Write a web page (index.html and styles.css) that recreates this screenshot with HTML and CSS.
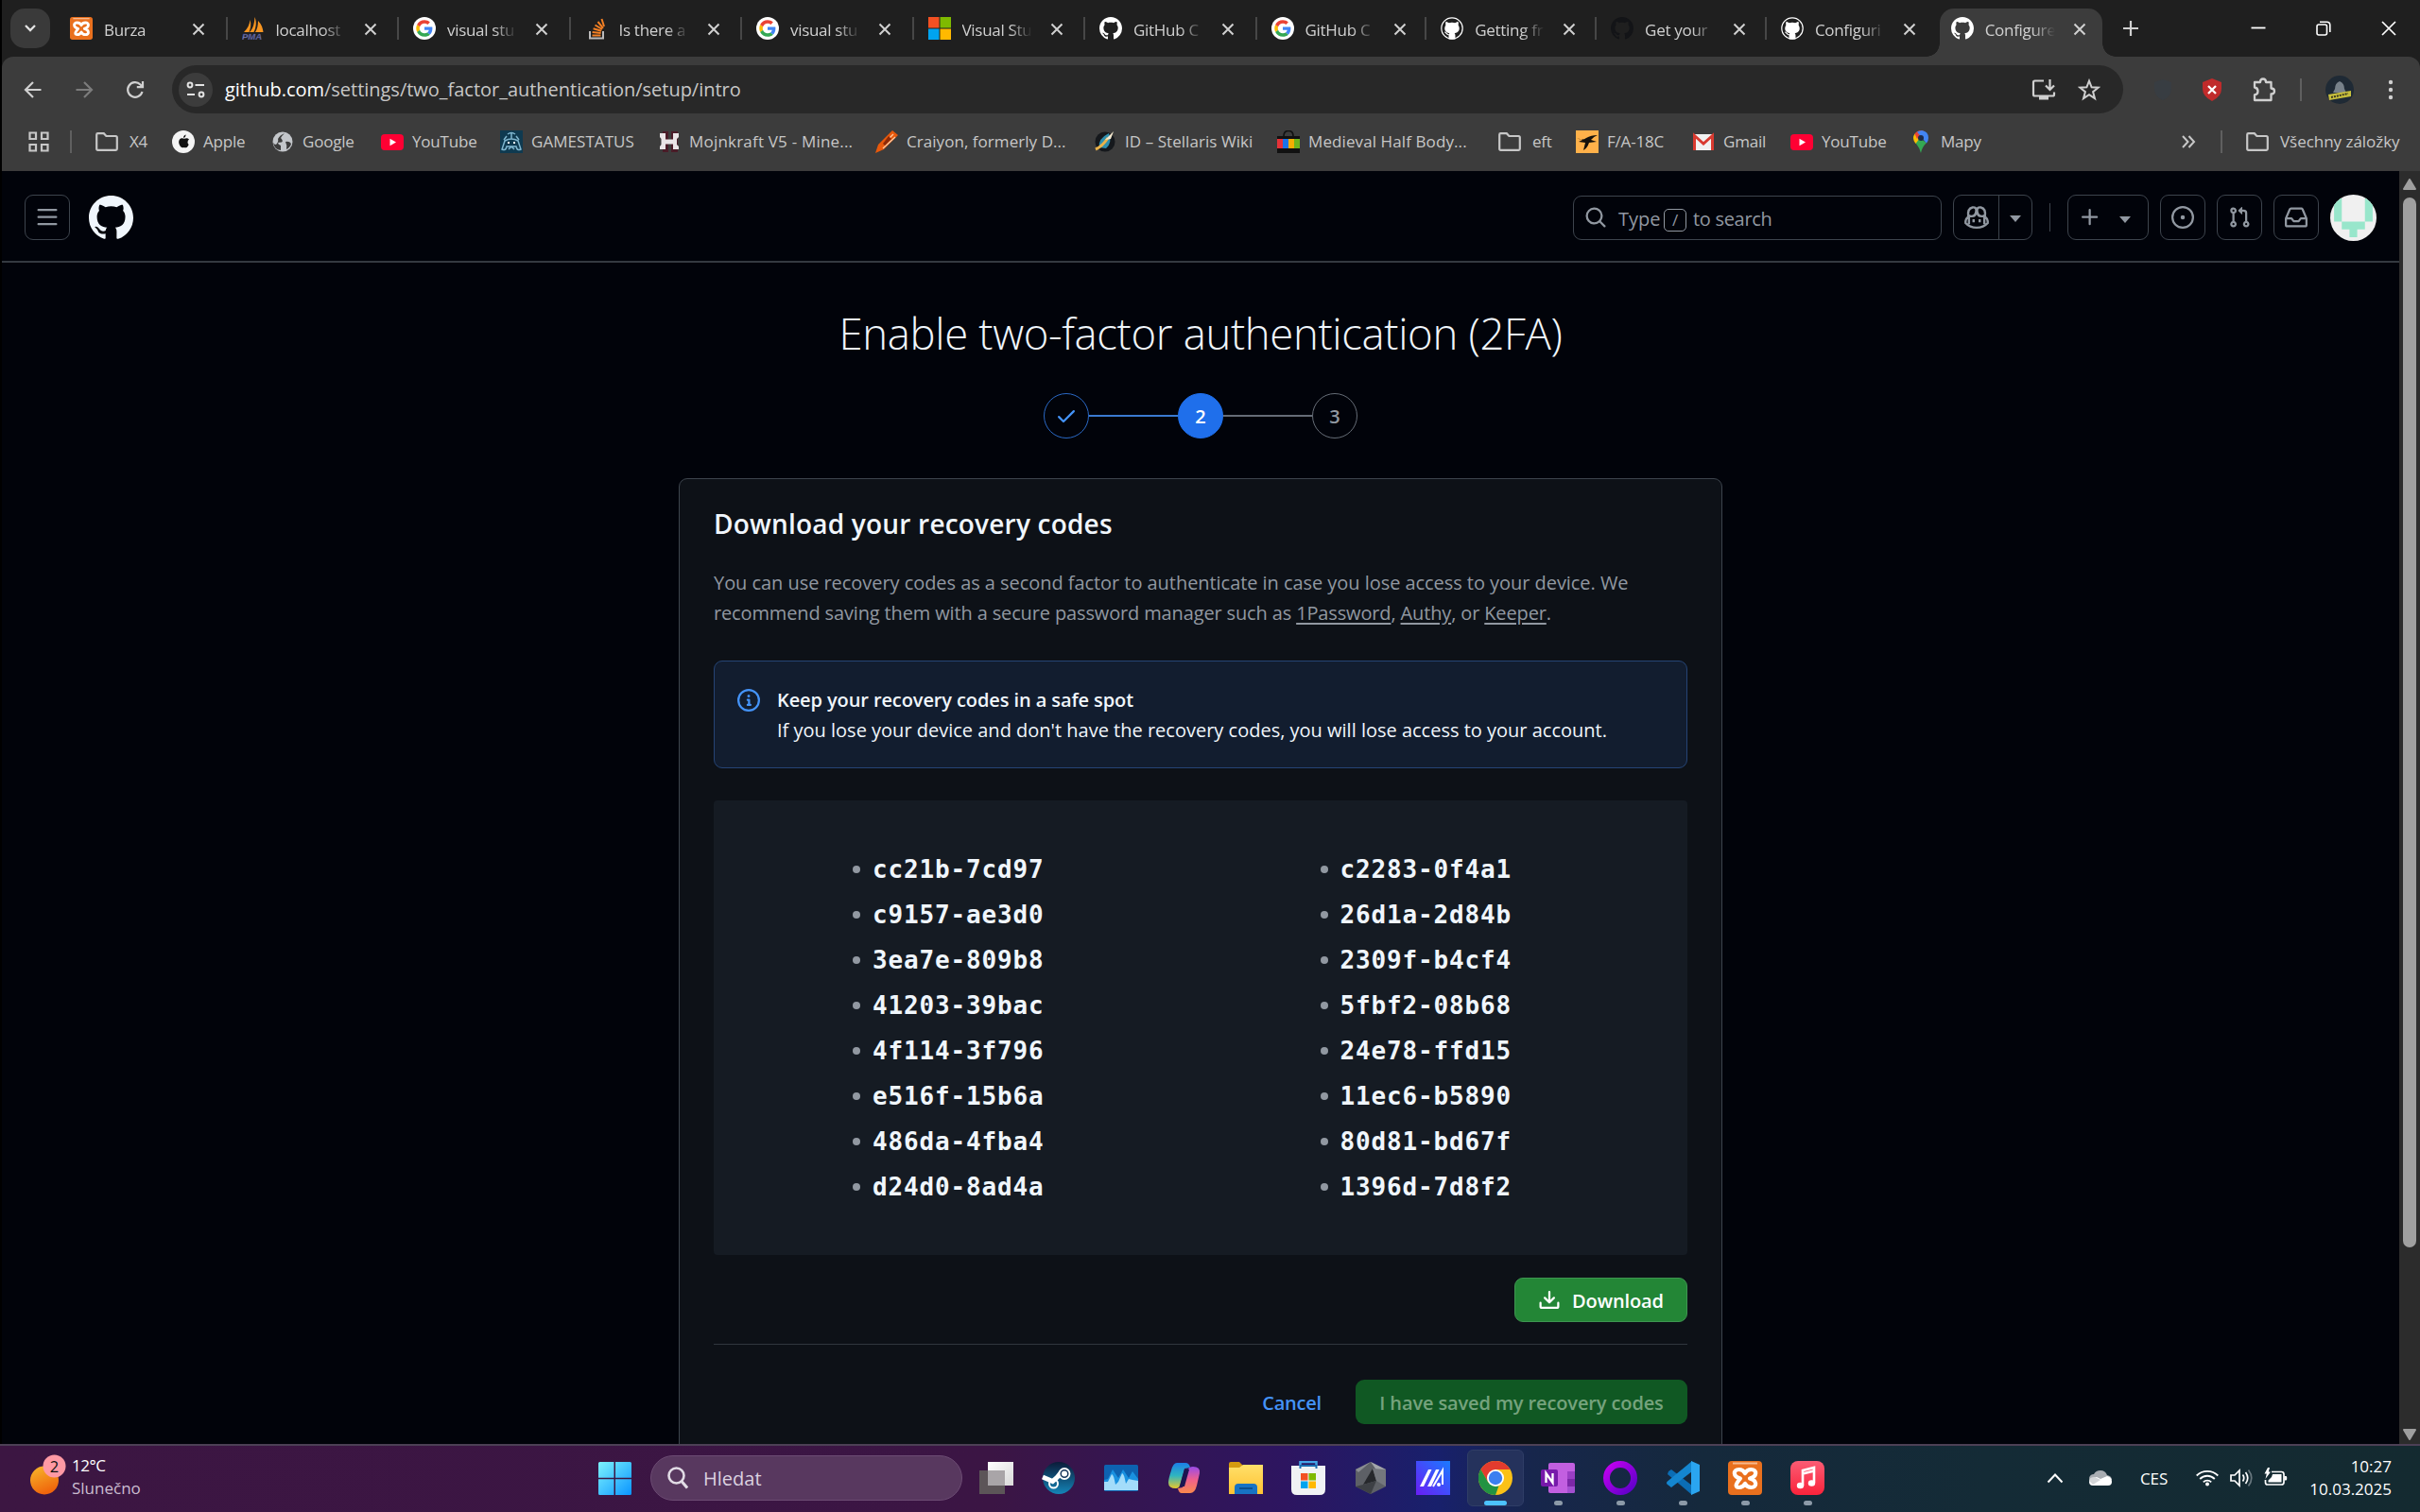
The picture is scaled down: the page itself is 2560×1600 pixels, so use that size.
FILE: index.html
```html
<!DOCTYPE html>
<html lang="cs">
<head>
<meta charset="utf-8">
<title>Configure two-factor authentication</title>
<link rel="stylesheet" href="styles.css">
</head>
<body>
<svg width="0" height="0" class="defs">
  <defs>
    <linearGradient id="gWin" x1="0" y1="0" x2="1" y2="1"><stop offset="0" stop-color="#7df3ff"/><stop offset="1" stop-color="#0a95ff"/></linearGradient>
    <linearGradient id="gSun" x1="0" y1="0" x2=".4" y2="1"><stop offset="0" stop-color="#f7b92c"/><stop offset="1" stop-color="#f0660c"/></linearGradient>
    <linearGradient id="gSteam" x1="0" y1="0" x2="0" y2="1"><stop offset="0" stop-color="#0b1a38"/><stop offset="1" stop-color="#1486b8"/></linearGradient>
    <linearGradient id="gCopA" x1="0" y1="0" x2="0" y2="1"><stop offset="0" stop-color="#1c7fe8"/><stop offset=".5" stop-color="#2fb5c0"/><stop offset="1" stop-color="#e8c92c"/></linearGradient>
    <linearGradient id="gCopB" x1="0" y1="0" x2="0" y2="1"><stop offset="0" stop-color="#9a4be8"/><stop offset=".5" stop-color="#f0608c"/><stop offset="1" stop-color="#f98a4c"/></linearGradient>
    <linearGradient id="gM" x1="1" y1="0" x2="0" y2="1"><stop offset="0" stop-color="#1a7bff"/><stop offset="1" stop-color="#6a1df5"/></linearGradient>
    <linearGradient id="gRing" x1="0" y1="0" x2="1" y2="1"><stop offset="0" stop-color="#c400f0"/><stop offset="1" stop-color="#5a00c8"/></linearGradient>
    <linearGradient id="gMusic" x1="0" y1="0" x2="0" y2="1"><stop offset="0" stop-color="#fb5c74"/><stop offset="1" stop-color="#fa233b"/></linearGradient>
    <linearGradient id="gFolder" x1="0" y1="0" x2="0" y2="1"><stop offset="0" stop-color="#ffe06a"/><stop offset="1" stop-color="#ffc233"/></linearGradient>
    <linearGradient id="gPaper" x1="0" y1="0" x2="1" y2="1"><stop offset="0" stop-color="#ffffff"/><stop offset="1" stop-color="#d8d8d8"/></linearGradient>
    <symbol id="octocat" viewBox="0 0 16 16"><path d="M8 0c4.42 0 8 3.58 8 8a8.013 8.013 0 0 1-5.45 7.59c-.4.08-.55-.17-.55-.38 0-.27.01-1.13.01-2.2 0-.75-.25-1.23-.54-1.48 1.78-.2 3.65-.88 3.65-3.95 0-.88-.31-1.59-.82-2.15.08-.2.36-1.02-.08-2.12 0 0-.67-.22-2.2.82-.64-.18-1.32-.27-2-.27-.68 0-1.36.09-2 .27-1.53-1.03-2.2-.82-2.2-.82-.44 1.1-.16 1.92-.08 2.12-.51.56-.82 1.28-.82 2.15 0 3.06 1.86 3.75 3.64 3.95-.23.2-.44.55-.51 1.07-.46.21-1.61.55-2.33-.66-.15-.24-.6-.83-1.23-.82-.67.01-.27.38.01.53.34.19.73.9.82 1.13.16.45.68 1.31 2.69.94 0 .67.01 1.3.01 1.49 0 .21-.15.45-.55.38A7.995 7.995 0 0 1 0 8c0-4.42 3.58-8 8-8Z"/></symbol>
    <symbol id="docscat" viewBox="0 0 24 24"><circle cx="12" cy="12" r="11.2" fill="none" stroke="#fff" stroke-width="1.2"/><path fill="#fff" d="M5.6 4.8 8.8 6.3a11 11 0 0 1 6.4 0l3.2-1.5c.6 1.4.5 2.800.2 3.700 2.600 4.200.6 8.200-4 8.700.8.700.9 1.500.9 2.800v3.600h-7v-3.600c0-1.300.1-2.100.9-2.800-4.600-.5-6.600-4.500-4-8.700-.3-.9-.4-2.300.2-3.700Z"/><path d="M4.200 16c1.800 0 1.800 3 4.500 2.600" fill="none" stroke="#fff" stroke-width="1.200"/></symbol>
    <symbol id="google" viewBox="0 0 48 48"><circle cx="24" cy="24" r="24" fill="#fff"/><g transform="translate(6.500 6.500) scale(.73)"><path fill="#4285F4" d="M46.980 24.550c0-1.570-.15-3.090-.38-4.550H24v9.020h12.940c-.58 2.960-2.260 5.480-4.780 7.180l7.730 6c4.510-4.180 7.090-10.360 7.090-17.650z"/><path fill="#FBBC05" d="M10.530 28.590c-.48-1.450-.76-2.990-.76-4.590s.27-3.140.76-4.590l-7.980-6.190C.92 16.460 0 20.120 0 24c0 3.880.92 7.540 2.560 10.780l7.970-6.190z"/><path fill="#34A853" d="M24 48c6.480 0 11.930-2.130 15.890-5.810l-7.730-6c-2.150 1.450-4.920 2.300-8.160 2.300-6.260 0-11.570-4.220-13.470-9.910l-7.980 6.190C6.510 42.620 14.620 48 24 48z"/><path fill="#EA4335" d="M24 9.500c3.540 0 6.710 1.220 9.210 3.600l6.850-6.850C35.900 2.380 30.470 0 24 0 14.620 0 6.510 5.380 2.560 13.220l7.980 6.190C12.430 13.720 17.740 9.500 24 9.500z"/></g></symbol>
    <symbol id="x" viewBox="0 0 14 14"><path d="M1.500 1.500 12.500 12.500M12.500 1.500 1.500 12.500" fill="none" stroke="currentColor" stroke-width="2"/></symbol>
    <symbol id="folder" viewBox="0 0 24 24"><path d="M1.200 19.500V4.500q0-1.300 1.300-1.300h6.300l2.600 2.800h10q1.400 0 1.400 1.400v12.100q0 1.300-1.400 1.300H2.500q-1.300 0-1.300-1.300Z" fill="none" stroke="#c7c7c7" stroke-width="2.200"/></symbol>
    <symbol id="yt" viewBox="0 0 24 24"><rect y="4" width="24" height="17" rx="4" fill="#ff0033"/><path d="m9.500 8.800 6.500 3.700-6.500 3.700Z" fill="#fff"/></symbol>
    <symbol id="xampp" viewBox="0 0 36 36"><rect width="36" height="36" rx="4" fill="#e9701e"/><path d="M5 2.500h26" stroke="#f7b88c" stroke-width="2"/><g fill="none" stroke="#fff" stroke-width="4.200" stroke-linejoin="round"><path d="M13 18.500C5 16.500 5 9 11.500 9Q16 9 18 13 20 9 24.500 9C31 9 31 16.500 23 18.500 31 20.500 31 28 24.500 28Q20 28 18 24 16 28 11.500 28 5 28 13 18.500Z"/></g></symbol>
  </defs>
</svg>

<div class="browser">
  <div class="tabstrip">
    <div class="tabsearch"><svg width="14" height="10" viewBox="0 0 14 10"><path d="m2 2 5 5 5-5" fill="none" stroke="#e3e3e3" stroke-width="2.300"/></svg></div>
    <div class="tab"><svg class="fav"><use href="#xampp"/></svg><span class="tt">Burza</span><svg class="tx"><use href="#x"/></svg></div>
    <div class="tab"><svg class="fav" viewBox="0 0 24 24"><path d="M2 16C6 12 8 8 8.500 3c1.500 5 .5 9-1 13ZM8 16c4-4 5-9 5.500-16 2.500 6 1 12-1 16ZM14 16c2-3 3-7 3-12 4 4 5 8 5.500 12Z" fill="#f79520"/><text x="0" y="24" font-family="Liberation Sans" font-size="9.500" font-style="italic" font-weight="700" fill="#7c80b8" stroke="#34386e" stroke-width=".4">PMA</text></svg><span class="tt">localhost</span><svg class="tx"><use href="#x"/></svg></div>
    <div class="tab"><svg class="fav"><use href="#google"/></svg><span class="tt">visual stu</span><svg class="tx"><use href="#x"/></svg></div>
    <div class="tab"><svg class="fav" viewBox="0 0 24 24"><path d="M5 15v7.500h14V15" fill="none" stroke="#bcbbbb" stroke-width="2"/><g stroke="#f48024" stroke-width="2"><path d="M7.500 19.500h9M7.600 16l9 1M8.600 12.300l8.600 2.400M10.500 8.500l7.500 4.500M13.500 5l5.500 6.800M17.500 2l2.500 8"/></g></svg><span class="tt">Is there a</span><svg class="tx"><use href="#x"/></svg></div>
    <div class="tab"><svg class="fav"><use href="#google"/></svg><span class="tt">visual stu</span><svg class="tx"><use href="#x"/></svg></div>
    <div class="tab"><svg class="fav" viewBox="0 0 24 24"><path fill="#f25022" d="M0 0h11.500v11.500H0z"/><path fill="#7fba00" d="M12.500 0H24v11.500H12.500z"/><path fill="#00a4ef" d="M0 12.500h11.500V24H0z"/><path fill="#ffb900" d="M12.500 12.500H24V24H12.500z"/></svg><span class="tt">Visual Stu</span><svg class="tx"><use href="#x"/></svg></div>
    <div class="tab"><svg class="fav white"><use href="#octocat"/></svg><span class="tt">GitHub C</span><svg class="tx"><use href="#x"/></svg></div>
    <div class="tab n"><svg class="fav"><use href="#google"/></svg><span class="tt">GitHub C</span><svg class="tx"><use href="#x"/></svg></div>
    <div class="tab n"><svg class="fav"><use href="#docscat"/></svg><span class="tt">Getting fr</span><svg class="tx"><use href="#x"/></svg></div>
    <div class="tab n"><svg class="fav dim"><use href="#octocat"/></svg><span class="tt">Get your</span><svg class="tx"><use href="#x"/></svg></div>
    <div class="tab n nosep"><svg class="fav"><use href="#docscat"/></svg><span class="tt">Configuri</span><svg class="tx"><use href="#x"/></svg></div>
    <div class="tab active"><svg class="fav white"><use href="#octocat"/></svg><span class="tt">Configure</span><svg class="tx"><use href="#x"/></svg></div>
    <svg class="newtab" viewBox="0 0 18 18"><path d="M9 1v16M1 9h16" stroke="#d0d0d0" stroke-width="2.200"/></svg>
    <div class="winbtns">
      <svg width="16" height="16"><path d="M.5 7.500h15" stroke="#fff" stroke-width="1.800"/></svg>
      <svg width="16" height="16" viewBox="0 0 16 16"><rect x="1" y="4" width="10.500" height="11" rx="2" fill="none" stroke="#fff" stroke-width="1.600"/><path d="M4 1.200h7.500q3.300 0 3.300 3.300V12" fill="none" stroke="#fff" stroke-width="1.600"/></svg>
      <svg width="16" height="16"><path d="m1 1 14 14M15 1 1 15" stroke="#fff" stroke-width="1.700"/></svg>
    </div>
  </div>

  <div class="chrome">
    <div class="toolbar">
      <svg class="nav" viewBox="0 0 20 20"><path d="M18.500 10H2M10 2 2 10l8 8" fill="none" stroke="#d0d0d0" stroke-width="2.200"/></svg>
      <svg class="nav" viewBox="0 0 20 20"><path d="M1.500 10H18M10 2l8 8-8 8" fill="none" stroke="#7c7c7c" stroke-width="2.200"/></svg>
      <svg class="nav" viewBox="0 0 20 20"><path d="M17.500 12a7.800 7.800 0 1 1-2-7.500L18 7M18 1v6.200h-6.200" fill="none" stroke="#d0d0d0" stroke-width="2.200"/></svg>
      <div class="omnibox">
        <span class="site"><svg width="20" height="20" viewBox="0 0 20 20"><g fill="none" stroke="#e3e3e3" stroke-width="2"><circle cx="4" cy="5" r="2.400"/><path d="M9.500 5H19M1 15h8"/><circle cx="16" cy="15" r="2.400"/></g></svg></span>
        <span class="url"><b>github.com</b>/settings/two_factor_authentication/setup/intro</span>
        <svg class="inst" viewBox="0 0 26 24"><path d="M13 2.500H3.500q-1.500 0-1.500 1.500v13q0 1.500 1.500 1.500h19q1.500 0 1.500-1.500v-2.500M19.500 1v10M15 7.500l4.500 4.500L24 7.500" fill="none" stroke="#d0d0d0" stroke-width="2.200"/><path d="M8 19h10v3.500H8Z" fill="#d0d0d0"/></svg>
        <svg class="star" viewBox="0 0 24 24"><path d="m12 2.600 2.600 6.700 7 .4-5.500 4.500 1.900 7L12 17.200l-6 4 1.900-7L2.400 9.700l7-.4Z" fill="none" stroke="#d0d0d0" stroke-width="2"/></svg>
      </div>
      <div class="ext">
        <svg width="22" height="24" viewBox="0 0 22 24"><path d="m11 1 9 3v7q0 8-9 12-9-4-9-12V4Z" fill="#383d42"/></svg>
        <svg width="22" height="24" viewBox="0 0 22 24"><path d="m11 0 10 4v7q0 8-10 13Q1 19 1 11V4Z" fill="#c02b2b"/><path d="m7 8 8 8m0-8-8 8" stroke="#fff" stroke-width="2.300"/></svg>
        <svg width="26" height="26" viewBox="0 0 26 26"><path d="M3 5h6q0-3.500 3-3.500T15 5h5.500v6.500q3.500 0 3.500 3t-3.500 3V24H3v-5.500q3.500-.5 3.500-4T3 10.500Z" fill="none" stroke="#d0d0d0" stroke-width="2.300" stroke-linejoin="round"/></svg>
        <i></i>
        <svg width="30" height="30" viewBox="0 0 30 30"><circle cx="15" cy="15" r="15" fill="#1f2a35"/><path d="M15 6q5 2 5 8l2 4H8l2-4q0-6 5-8Z" fill="#77818a"/><path d="m3 20 24-4v6L4 26Z" fill="#c8bf3c"/><path d="m6 23 18-4" stroke="#3a3a20" stroke-width="2" stroke-dasharray="2 1"/></svg>
        <svg width="6" height="22" viewBox="0 0 6 22"><g fill="#d0d0d0"><circle cx="3" cy="3" r="2.200"/><circle cx="3" cy="11" r="2.200"/><circle cx="3" cy="19" r="2.200"/></g></svg>
      </div>
    </div>
    <div class="bookmarks">
      <svg class="apps" viewBox="0 0 22 22"><g fill="none" stroke="#c7c7c7" stroke-width="2.200"><path d="M1.500 1.500h6.500v6.500H1.500zM14 1.500h6.500v6.500H14zM1.500 14h6.500v6.500H1.500zM14 14h6.500v6.500H14z"/></g></svg>
      <i class="bsep"></i>
      <div class="bm f b1"><svg><use href="#folder"/></svg><span>X4</span></div>
      <div class="bm b2"><svg viewBox="0 0 24 24"><circle cx="12" cy="12" r="12" fill="#f4f4f4"/><path d="M16.500 12.500q0-2 1.500-3-2-2.300-5-.7-3.300-1.500-5 .7-2 3 .5 7 1.500 2.500 4 1.500 3 1 4.200-1.200l1-1.800q-1.200-.8-1.200-2.500ZM12 8q0-3 2.700-3.500Q14.600 7.500 12 8Z" fill="#111"/></svg><span>Apple</span></div>
      <div class="bm b3"><svg viewBox="0 0 24 24"><circle cx="12" cy="12" r="10.500" fill="#c3c6ca"/><path d="M14 3q-3 3-4 5 3 3 1 4.500-4 0-4 .5 0 2 3 3v5q-7-1-8-8 1 2 3 2 3-3 2-6 2-4 7-6ZM15 12q4-1 6 2-1 4-5 6 1-4-1-8Z" fill="#3c3c3c"/></svg><span>Google</span></div>
      <div class="bm b4"><svg><use href="#yt"/></svg><span>YouTube</span></div>
      <div class="bm b5"><svg viewBox="0 0 24 24"><path fill="#0f3a50" d="M0 0h24v24H0z"/><g fill="none" stroke="#7fb6cf" stroke-width="1.500"><path d="M12 2v7M8 4q4-3 8 0M5 11q7-4 14 0l3 9q-4 2-5-3h-10q-1 5-5 3ZM7 6l-3 4m13-4 3 4M9 20l3-3 3 3"/></g><path d="M8 13h2m4 0h2" stroke="#fff" stroke-width="2"/></svg><span>GAMESTATUS</span></div>
      <div class="bm b6"><svg viewBox="0 0 24 24"><path fill="#4a1c28" d="M5 1h6v22H5zM14 1h7v22h-7z"/><path d="M2 3h6v6.500h8V3h6v4l-2 2v6l2 2v3h-6v-5.500H8V20H2v-3l1.500-2V9L2 7Z" fill="#e9e4e6"/></svg><span>Mojnkraft V5 - Mine...</span></div>
      <div class="bm b7"><svg viewBox="0 0 24 24"><path d="M18 0l6 5L9 20 0 24l3-9Z" fill="#e8590c"/><path d="m19 4-9 9m11-6L8 19" stroke="#ffc9a0" stroke-width="1.300"/><path d="m8 14 6-8 3 3-7 7Z" fill="#8c2a08"/></svg><span>Craiyon, formerly D...</span></div>
      <div class="bm b8"><svg viewBox="0 0 24 24"><circle cx="12" cy="12" r="10.500" fill="#15181c"/><path d="M6 18Q4 9 16 3q4 10-3 16Z" fill="#2f8fae"/><path d="M2 20Q9 17 15 8" stroke="#eab34a" stroke-width="3" fill="none"/><path d="m21 1-9 9 6-1Z" fill="#f5ead0"/></svg><span>ID – Stellaris Wiki</span></div>
      <div class="bm b9"><svg viewBox="0 0 24 24"><path d="M7 6q0-5.500 5-5.500T17 6" fill="none" stroke="#111" stroke-width="1.600"/><path fill="#111" d="M0 6h24v18H0z"/><path fill="#e53238" d="M0 9h6.500v10H0z"/><path fill="#1a73e8" d="M6 9h6v10H6z"/><path fill="#f5af02" d="M12 9h6v10h-6z"/><path fill="#6fb51c" d="M18 9h6v10h-6z"/></svg><span>Medieval Half Body...</span></div>
      <div class="bm f b10"><svg><use href="#folder"/></svg><span>eft</span></div>
      <div class="bm b11"><svg viewBox="0 0 24 24"><path fill="#ffb14a" d="M0 0h24v24H0z"/><path d="M1 8q6 3 10 0 5-3 12-3-5 2-7 5l6 2-8 1q-2 6-6 8l2-8-7-1 4-2Z" fill="#14110c"/></svg><span>F/A-18C</span></div>
      <div class="bm b12"><svg viewBox="0 0 24 24"><path fill="#f1f1f1" d="M1 4h22v17H1z"/><path d="M2.500 21V5.500L12 14l9.500-8.500V21" fill="none" stroke="#d93a30" stroke-width="3"/></svg><span>Gmail</span></div>
      <div class="bm b13"><svg><use href="#yt"/></svg><span>YouTube</span></div>
      <div class="bm b14"><svg viewBox="0 0 24 24"><path d="M12 24q-1-5-4-8.500T4 8q0 0 1-3l13 8q-5 5-6 11Z" fill="#34a853"/><path d="M4 8q0-2 1.500-4.500L11 8l-4.500 6Q4 11 4 8Z" fill="#fbbc04"/><path d="M5.500 3.500Q8 0 12 0l3 .5L8 9Z" fill="#ea4335"/><path d="M8 1.500Q11 0 13 0q7 1 7 8 0 3-2 5.500L13 8Z" fill="#4285f4"/><circle cx="12" cy="8" r="3" fill="#1c2b4a"/></svg><span>Mapy</span></div>
      <svg class="more" viewBox="0 0 16 14"><path d="m2 1 5.500 6L2 13M8.500 1 14 7l-5.500 6" fill="none" stroke="#c7c7c7" stroke-width="2"/></svg>
      <i class="bsep s2"></i>
      <div class="bm f b15"><svg><use href="#folder"/></svg><span>Všechny záložky</span></div>
    </div>
  </div>

  <div class="viewport">
    <div class="page">
      <header class="gh">
        <div class="ib"><svg width="24" height="24" viewBox="0 0 16 16"><path d="M1 2.750A.75.75 0 0 1 1.750 2h12.500a.75.75 0 0 1 0 1.500H1.750A.75.75 0 0 1 1 2.750Zm0 5A.75.75 0 0 1 1.750 7h12.500a.75.75 0 0 1 0 1.500H1.750A.75.75 0 0 1 1 7.750ZM1.750 12h12.500a.75.75 0 0 1 0 1.500H1.750a.75.75 0 0 1 0-1.500Z"/></svg></div>
        <svg class="logo"><use href="#octocat"/></svg>
        <div class="search"><svg width="24" height="24" viewBox="0 0 16 16"><path d="M10.680 11.740a6 6 0 0 1-7.922-8.982 6 6 0 0 1 8.982 7.922l3.040 3.040a.749.749 0 0 1-.326 1.275.749.749 0 0 1-.734-.215ZM11.500 7a4.499 4.499 0 1 0-8.997 0A4.499 4.499 0 0 0 11.500 7Z"/></svg><span class="s1">Type</span><kbd>/</kbd><span class="s2t">to search</span></div>
        <div class="group cop"><span><svg width="26" height="26" viewBox="0 0 16 16" fill="none" stroke="#9198a1" stroke-width="1.500"><path d="M2.200 8Q.8 9 .8 10.500v1.200Q3.500 14.700 8 14.700t7.200-3v-1.200Q15.200 9 13.800 8M2.600 8q-.9-5.800 2.700-6.500Q8 1.200 7.700 4 7.400 7.300 4.800 7.300 3.500 7.300 2.600 6.500M13.400 8q.9-5.800-2.700-6.500Q8 1.200 8.300 4q.3 3.300 2.900 3.300 1.300 0 2.200-.8M3 7.500V12.500M13 7.500v5M6 9.200v2M10 9.200v2"/></svg></span><span class="car"><svg width="12" height="7"><path d="M0 0h12L6 7Z" fill="#9198a1"/></svg></span></div>
        <i class="vs"></i>
        <div class="group add"><svg width="24" height="24" viewBox="0 0 16 16"><path d="M7.750 2a.75.75 0 0 1 .75.75V7h4.250a.75.75 0 0 1 0 1.500H8.500v4.250a.75.75 0 0 1-1.500 0V8.500H2.750a.75.75 0 0 1 0-1.500H7V2.750A.75.75 0 0 1 7.750 2Z"/></svg><svg width="12" height="7"><path d="M0 0h12L6 7Z"/></svg></div>
        <div class="ib"><svg width="24" height="24" viewBox="0 0 16 16"><path d="M8 9.500a1.500 1.500 0 1 0 0-3 1.500 1.500 0 0 0 0 3Z"/><path d="M8 0a8 8 0 1 1 0 16A8 8 0 0 1 8 0ZM1.500 8a6.500 6.500 0 1 0 13 0 6.500 6.500 0 0 0-13 0Z"/></svg></div>
        <div class="ib"><svg width="24" height="24" viewBox="0 0 16 16"><path d="M1.500 3.250a2.250 2.250 0 1 1 3 2.122v5.256a2.251 2.251 0 1 1-1.500 0V5.372A2.250 2.250 0 0 1 1.500 3.250Zm5.677-.177L9.573.677A.25.25 0 0 1 10 .854V2.500h1A2.500 2.500 0 0 1 13.500 5v5.628a2.251 2.251 0 1 1-1.500 0V5a1 1 0 0 0-1-1h-1v1.646a.25.25 0 0 1-.427.177L7.177 3.427a.25.25 0 0 1 0-.354ZM3.750 2.500a.75.75 0 1 0 0 1.500.75.75 0 0 0 0-1.500Zm0 9.500a.75.75 0 1 0 0 1.500.75.75 0 0 0 0-1.500Zm8.250.75a.75.75 0 1 0 1.500 0 .75.75 0 0 0-1.500 0Z"/></svg></div>
        <div class="ib"><svg width="24" height="24" viewBox="0 0 16 16"><path d="M2.800 2.060A1.750 1.750 0 0 1 4.410 1h7.180c.7 0 1.333.417 1.610 1.060l2.740 6.395c.04.093.06.194.06.295v4.500A1.750 1.750 0 0 1 14.250 15H1.750A1.750 1.750 0 0 1 0 13.250v-4.500c0-.101.02-.202.06-.295Zm1.610.44a.25.25 0 0 0-.23.152L1.887 8H4.750a.75.75 0 0 1 .6.3L6.625 10h2.750l1.275-1.700a.75.75 0 0 1 .6-.3h2.863L11.820 2.652a.25.25 0 0 0-.23-.152Zm10.090 7h-2.875l-1.275 1.700a.75.75 0 0 1-.6.300h-3.500a.75.75 0 0 1-.6-.300L4.375 9.500H1.500v3.750c0 .138.112.250.250.250h12.500a.25.25 0 0 0 .25-.25Z"/></svg></div>
        <svg class="avatar" viewBox="0 0 48 48"><clipPath id="av"><circle cx="24" cy="24" r="24"/></clipPath><g clip-path="url(#av)"><path fill="#f0f0f0" d="M0 0h48v48H0z"/><path fill="#98e6cb" d="M4 4h8v24H4zM36 4h8v24h-8zM12 28h24v8H12zM20 36h8v8h-8z"/></g></svg>
      </header>

      <main>
        <h1>Enable two-factor authentication (2FA)</h1>
        <div class="steps">
          <span class="st done"><svg width="24" height="24" viewBox="0 0 16 16"><path fill="#4493f8" d="M13.780 4.220a.75.75 0 0 1 0 1.060l-7.250 7.250a.75.75 0 0 1-1.060 0L2.220 9.280a.751.751 0 0 1 .018-1.042.751.751 0 0 1 1.042-.018L6 10.940l6.720-6.720a.75.75 0 0 1 1.060 0Z"/></svg></span><i class="blue"></i><span class="st cur">2</span><i></i><span class="st">3</span>
        </div>
        <section class="card">
          <h2>Download your recovery codes</h2>
          <p class="lead"><span class="l1">You can use recovery codes as a second factor to authenticate in case you lose access to your device. We</span><br><span class="l2">recommend saving them with a secure password manager such as <u>1Password</u>, <u>Authy</u>, or <u>Keeper</u>.</span></p>
          <div class="info">
            <svg width="24" height="24" viewBox="0 0 16 16"><path fill="#4493f8" d="M0 8a8 8 0 1 1 16 0A8 8 0 0 1 0 8Zm8-6.500a6.500 6.500 0 1 0 0 13 6.500 6.500 0 0 0 0-13ZM6.500 7.750A.75.75 0 0 1 7.250 7h1a.75.75 0 0 1 .75.750v2.750h.250a.75.75 0 0 1 0 1.500h-2a.75.75 0 0 1 0-1.500h.250v-2h-.250a.75.75 0 0 1-.750-.750ZM8 6a1 1 0 1 1 0-2 1 1 0 0 1 0 2Z"/></svg>
            <div><strong>Keep your recovery codes in a safe spot</strong><span>If you lose your device and don't have the recovery codes, you will lose access to your account.</span></div>
          </div>
          <div class="codes">
            <ul><li>cc21b-7cd97</li><li>c9157-ae3d0</li><li>3ea7e-809b8</li><li>41203-39bac</li><li>4f114-3f796</li><li>e516f-15b6a</li><li>486da-4fba4</li><li>d24d0-8ad4a</li></ul>
            <ul><li>c2283-0f4a1</li><li>26d1a-2d84b</li><li>2309f-b4cf4</li><li>5fbf2-08b68</li><li>24e78-ffd15</li><li>11ec6-b5890</li><li>80d81-bd67f</li><li>1396d-7d8f2</li></ul>
          </div>
          <div class="dl"><button class="btn download"><svg width="24" height="24" viewBox="0 0 16 16" fill="#fff"><path d="M2.750 14A1.750 1.750 0 0 1 1 12.250v-2.500a.75.75 0 0 1 1.500 0v2.500c0 .138.112.250.250.250h10.500a.25.25 0 0 0 .25-.25v-2.500a.75.75 0 0 1 1.500 0v2.500A1.750 1.750 0 0 1 13.250 14Z"/><path d="M7.250 7.689V2a.75.75 0 0 1 1.500 0v5.689l1.970-1.969a.749.749 0 1 1 1.060 1.060l-3.250 3.250a.749.749 0 0 1-1.060 0L4.220 6.780a.749.749 0 1 1 1.060-1.060l1.970 1.969Z"/></svg><span>Download</span></button></div>
          <div class="actions"><a>Cancel</a><button class="btn saved"><span>I have saved my recovery codes</span></button></div>
        </section>
      </main>
    </div>
    <div class="scroll"><svg width="14" height="12"><path d="M7 1 13 11H1Z" fill="#9f9f9f" stroke="#9f9f9f" stroke-linejoin="round" stroke-width="2"/></svg><i></i><svg width="14" height="12"><path d="M7 11 13 1H1Z" fill="#9f9f9f" stroke="#9f9f9f" stroke-linejoin="round" stroke-width="2"/></svg></div>
  </div>
</div>

<footer class="taskbar">
  <div class="weather">
    <svg width="40" height="44" viewBox="0 0 40 44"><circle cx="17" cy="27.500" r="15" fill="url(#gSun)"/><circle cx="27.500" cy="12.500" r="12" fill="#ff99a4"/><text x="27.500" y="18.500" text-anchor="middle" font-family="Open Sans, sans-serif" font-size="16.500" fill="#111">2</text></svg>
    <div><span class="w1">12°C</span><span class="w2">Slunečno</span></div>
  </div>
  <svg class="start" viewBox="0 0 35 35"><g fill="url(#gWin)"><path d="M1.500 0h15v16.700H0V1.500Q0 0 1.500 0zM18 0h15.500Q35 0 35 1.500v15.200H18zM0 18.200h16.500V35h-15Q0 35 0 33.500zM18 18.200h17v15.300q0 1.500-1.500 1.500H18z"/></g></svg>
  <div class="tsearch"><svg width="22" height="24" viewBox="0 0 22 24"><circle cx="9.500" cy="9.500" r="8" fill="none" stroke="#e2dce6" stroke-width="2.600"/><path d="m15 15.500 6 7" stroke="#e2dce6" stroke-width="3"/></svg><span>Hledat</span></div>
  <div class="apps-row">
    <div class="app"><svg viewBox="0 0 36 36"><path fill="#5c5558" d="M0 10h27v25H0z"/><path fill="url(#gPaper)" d="M9 1h27v25H9z"/><path fill="#a9a5a8" d="M9 10h18v16H9z"/></svg></div>
    <div class="app"><svg viewBox="0 0 36 36"><circle cx="18" cy="18" r="17" fill="url(#gSteam)"/><path d="M1 17 11.500 21.500l5-4.500 4-5" fill="none" stroke="#fff" stroke-width="5"/><circle cx="12.500" cy="24" r="4.500" fill="none" stroke="#fff" stroke-width="2"/><circle cx="24" cy="13.500" r="6.500" fill="#fff"/><circle cx="24" cy="13.500" r="3.800" fill="#fff" stroke="#17365c" stroke-width="1.500"/></svg></div>
    <div class="app"><svg viewBox="0 0 36 36"><rect y="4" width="36" height="28" rx="1.500" fill="#0d62b0"/><path d="M0 20 4 19 9 9l6 9 5-9 6 9 4-7 6 8v11H0Z" fill="#1991e0"/><path d="M0 22h4l4-8q2 0 4 11l3-3 4-9q2 0 4 11l3-5 4 1 6 1v10H0Z" fill="#a3dcfa"/></svg></div>
    <div class="app"><svg viewBox="0 0 36 36"><path d="M11 2h9q4 0 5 5l-6 1-5 18q-1 3-4 3-8 0-8-6 0-4 3-13Q7 2 11 2Z" fill="url(#gCopA)"/><path d="M25 34h-9q-3 0-4-5l5-1 6-19q1-3 5-3 8 0 7 7l-3 13q-2 8-7 8Z" fill="url(#gCopB)"/><path d="M19 9h5l-5 18h-5Z" fill="#1d1550"/></svg></div>
    <div class="app"><svg viewBox="0 0 36 36"><path fill="#d59a10" d="M0 3q0-2 2-2h9l4 4v5H0z"/><path fill="url(#gFolder)" d="M0 7h11l4-3h21v31H0z"/><path d="M6 35V28q0-4 4-4h16q4 0 4 4v7Z" fill="#1773c4"/><path d="M11 29h14" stroke="#0b4f8f" stroke-width="2"/></svg></div>
    <div class="app"><svg viewBox="0 0 36 36"><path d="M9.500 8V1h17v7" fill="none" stroke="#45a5e8" stroke-width="2.500"/><path d="M0 5h36v25q0 6-6 6H6q-6 0-6-6Z" fill="#f0f2f4"/><path d="M9.500 8V5h17v3" fill="none" stroke="#1a6db0" stroke-width="2"/><path fill="#f25022" d="M10 13h7.500v7.500H10z"/><path fill="#7fba00" d="M18.500 13H26v7.500h-7.500z"/><path fill="#00a4ef" d="M10 21.500h7.500V29H10z"/><path fill="#ffb900" d="M18.500 21.500H26V29h-7.500z"/></svg></div>
    <div class="app"><svg viewBox="0 0 36 36"><path d="m18 1 16 8v18l-16 8-16-8V9Z" fill="#5d6066"/><path d="m18 1 16 8-9 2Z" fill="#a4a7ac"/><path d="M18 1 2 9l3 3Z" fill="#8a8d92"/><path d="m20 8-10 17 14-4Z" fill="#26282c"/><path d="m20 8 4 13 10 6V9Z" fill="#74777d"/><path d="m10 25 14-4-6 14L2 27Z" fill="#3d4045"/></svg></div>
    <div class="app"><svg viewBox="0 0 36 36"><path fill="url(#gM)" d="M0 0h36v36H0z"/><path d="M4 27 13 9h3.500L8 27ZM12 27 21 9h3.500L16 27Z" fill="#fff"/><path d="m18 27 10-17v15" fill="none" stroke="#fff" stroke-width="2"/><circle cx="24" cy="25" r="2" fill="#fff"/></svg></div>
    <div class="app on"><svg viewBox="0 0 36 36"><circle cx="18" cy="18" r="18" fill="#fbc116"/><path d="M18 0a18 18 0 0 1 15.600 9H18L10.200 22.500 2.400 9A18 18 0 0 1 18 0Z" fill="#e33b2e"/><path d="M2.400 9 10.200 22.500 18 27l3.500-.700L18 36A18 18 0 0 1 2.400 9Z" fill="#229342"/><circle cx="18" cy="18" r="9" fill="#fff"/><circle cx="18" cy="18" r="7.200" fill="#3c7ff0"/></svg><i></i></div>
    <div class="app run"><svg viewBox="0 0 36 36"><rect x="8" y="2" width="28" height="32" rx="2" fill="#c25fe0"/><path fill="#9b3fc4" d="M28 11h8v8h-8z"/><path fill="#7d28a8" d="M28 19h8v8h-8z"/><path fill="#a34fd0" d="M28 27h8v5q0 2-2 2h-6z"/><rect y="9" width="18" height="18" rx="2" fill="#7719aa"/><path d="M5.500 23v-10l7 10V13" fill="none" stroke="#fff" stroke-width="2.300"/></svg><i></i></div>
    <div class="app run"><svg viewBox="0 0 36 36"><circle cx="18" cy="18" r="14.500" fill="none" stroke="url(#gRing)" stroke-width="7"/></svg><i></i></div>
    <div class="app run"><svg viewBox="0 0 36 36"><path d="m3 11 3-2 22 17v10L2 14Z" fill="#0b6db5"/><path d="M28 0v11L6 28l-4-3q-2-2 0-3.500Z" fill="#1486d0"/><path d="m27 0 9 4v28l-9 4Z" fill="#2aa5f0"/></svg><i></i></div>
    <div class="app run"><svg><use href="#xampp"/></svg><i></i></div>
    <div class="app run"><svg viewBox="0 0 36 36"><rect width="36" height="36" rx="8" fill="url(#gMusic)"/><path d="M13 26V10l12-3v16M13 13.500l12-3" fill="none" stroke="#fff" stroke-width="2.600"/><ellipse cx="10.500" cy="26" rx="3.700" ry="3.200" fill="#fff"/><ellipse cx="22.500" cy="23.500" rx="3.700" ry="3.200" fill="#fff"/></svg><i></i></div>
  </div>
  <div class="tray">
    <svg class="t1" width="18" height="11"><path d="m1.500 9.500 7.500-8 7.500 8" fill="none" stroke="#fff" stroke-width="2"/></svg>
    <svg class="t2" width="24" height="16" viewBox="0 0 24 16"><path d="M6 12q-6-1-6-4 1-4 5-4 2-4 7-4t7 5q5 1 5 5Z" fill="#a9adb2"/><path d="M4 16q-4 0-4-4 0-3 4-4l4-1 4 2 7-3q5 1 5 6 0 4-4 4Z" fill="#fff"/><path d="M0 11q0-4 6-4l6 3-8 5Z" fill="#d4d6d8"/></svg>
    <span class="ces">CES</span>
    <svg class="t3" width="24" height="18" viewBox="0 0 24 18"><g fill="none" stroke="#fff" stroke-width="1.800"><path d="M.7 6.500a16 16 0 0 1 22.600 0M4.200 10a11 11 0 0 1 15.600 0M7.800 13.300a6 6 0 0 1 8.400 0"/></g><circle cx="12" cy="15.500" r="2" fill="#fff"/></svg>
    <svg class="t4" width="24" height="20" viewBox="0 0 24 20"><path d="M1 7h4l5-5v16l-5-5H1Z" fill="none" stroke="#fff" stroke-width="1.700"/><path d="M13.500 6.500q2.500 3.500 0 7M16.500 4q4.500 6 0 12" fill="none" stroke="#fff" stroke-width="1.700"/><path d="M19.500 1.500q6.500 8.500 0 17" fill="none" stroke="#66757c" stroke-width="1.700"/></svg>
    <svg class="t5" width="25" height="20" viewBox="0 0 25 20"><path d="M8 4.500h10.500Q21 4.500 21 7v8.500q0 2.500-2.500 2.500h-15Q1.500 18 1.500 15.500V13" fill="none" stroke="#fff" stroke-width="1.700"/><path d="M9 7h9.500v8.500h-14v-2L8 10Z" fill="#fff"/><path d="M21.500 9h1.500q1.200 0 1.200 1.200v2q0 1.200-1.200 1.200h-1.500ZM4 0 .5 6.500h2.300L1.500 12 7 4.500H4.800L6 0Z" fill="#fff"/></svg>
    <div class="clock"><span>10:27</span><span>10.03.2025</span></div>
  </div>
</footer>
</body>
</html>
```
FILE: styles.css
```css
* { box-sizing: border-box; }
body {
  margin: 0; width: 2560px; height: 1600px; overflow: hidden;
  display: flex; flex-direction: column; background: #000;
  font-family: "Open Sans", "Noto Sans", sans-serif; color: #f0f6fc;
}
svg { display: block; flex: none; }
i { flex: none; }
.defs { position: absolute; }
.browser { height: 1528px; flex: none; display: flex; flex-direction: column; background: #1f1f1f; border-left: 2px solid #000; }

/* tabs */
.tabstrip { height: 60px; flex: none; display: flex; align-items: flex-start; padding-left: 9px; background: #1f1f1f; }
.tabsearch { width: 42px; height: 42px; margin: 9px 9px 0 0; border-radius: 15px; background: #3a3a3a; display: flex; align-items: center; justify-content: center; }
.tab { position: relative; flex: none; width: 181.5px; height: 51px; margin-top: 9px; padding-left: 12px; display: flex; align-items: center; font-size: 17px; color: #d0d0d0; }
.tab.n { width: 179.8px; }
.tab::after { content: ""; position: absolute; right: 3px; top: 9px; width: 2px; height: 24px; background: #474747; }
.tab.nosep::after, .tab.active::after { display: none; }
.fav { width: 24px; height: 24px; margin-bottom: 9px; }
.white { fill: #fff; }
.dim { fill: #131417; }
.tt { width: 76px; margin-left: 12px; margin-bottom: 6px; white-space: nowrap; overflow: hidden; letter-spacing: -.3px; -webkit-mask-image: linear-gradient(90deg, #000 50px, transparent 74px); mask-image: linear-gradient(90deg, #000 50px, transparent 74px); }
.tx { width: 14px; height: 14px; margin: 0 0 8px 17px; color: #d0d0d0; }
.tab.active { width: 172px; background: #3c3c3c; border-radius: 15px 15px 0 0; }
.tab.active::before { content: ""; position: absolute; z-index: 0; left: -14px; right: -14px; bottom: 0; height: 14px; background: radial-gradient(circle at 0 0, transparent 13.500px, #3c3c3c 14px) 0 0 / 14px 14px no-repeat, radial-gradient(circle at 100% 0, transparent 13.500px, #3c3c3c 14px) 100% 0 / 14px 14px no-repeat; }
.newtab { width: 18px; height: 18px; margin: 21px 0 0 21px; }
.winbtns { display: flex; gap: 53px; margin: 22px 25px 0 auto; }

/* toolbar */
.chrome { height: 121px; flex: none; background: #3c3c3c; border-radius: 12px 12px 0 0; }
.toolbar { height: 69px; display: flex; align-items: center; padding: 0 0 0 23px; }
.nav { width: 20px; height: 20px; margin-right: 34px; }
.omnibox { width: 2064px; height: 51px; margin-left: -5px; border-radius: 26px; background: #282828; display: flex; align-items: center; padding: 0 24px 0 7px; }
.site { width: 36px; height: 36px; border-radius: 50%; background: #3c3c3c; display: flex; align-items: center; justify-content: center; margin-right: 13px; }
.url { flex: 1; font-size: 20px; letter-spacing: -.02px; color: #c7c7c7; }
.url b { font-weight: 400; color: #fff; }
.inst { width: 26px; height: 24px; margin-right: 23px; }
.star { width: 24px; height: 24px; }
.ext { display: flex; align-items: center; margin-left: 31px; }
.ext > :nth-child(2) { margin-left: 30px; }
.ext > :nth-child(3) { margin-left: 31px; }
.ext i { width: 2px; height: 24px; background: #5f5f5f; margin: 0 25px; }
.ext > :last-child { margin-left: 36px; }

.bookmarks { height: 42px; display: flex; align-items: center; padding-left: 28px; color: #c7c7c7; font-size: 17px; }
.apps { width: 22px; height: 22px; }
.bsep { width: 2px; height: 24px; background: #5f5f5f; margin: 0 25px 0 22px; }
.bm { display: flex; align-items: center; flex: none; white-space: nowrap; }
.bm svg { width: 24px; height: 24px; margin-right: 9px; }
.bm.f svg { margin-right: 12px; }
.bm span { letter-spacing: -.2px; margin-bottom: 1px; }
.b1 { width: 81px; } .b2 { width: 105px; } .b3 { width: 116px; } .b4 { width: 126px; }
.b5 { width: 167px; } .b6 { width: 230px; } .b7 { width: 231px; } .b8 { width: 194px; }
.b9 { width: 234px; } .b10 { width: 82px; } .b11 { width: 123px; } .b12 { width: 104px; }
.b13 { width: 126px; } .b14 { width: 287px; }
.bm.b5 span { letter-spacing: .05px; }
.bm.b6 span, .bm.b7 span, .bm.b8 span { letter-spacing: .05px; }
.bm.b9 span { letter-spacing: .1px; }
.bm.b15 span { letter-spacing: -.03px; }
.bm.b6 span { letter-spacing: .2px; }
.more { width: 16px; height: 14px; }
.bsep.s2 { margin: 0 25px 0 26px; }

/* page */
.viewport { flex: 1; display: flex; min-height: 0; }
.page { flex: 1; background: #01030a; display: flex; flex-direction: column; overflow: hidden; }
.scroll { width: 22px; background: #2c2c2c; display: flex; flex-direction: column; align-items: center; padding: 8px 0 4px; }
.scroll i { width: 14px; height: 1111px; border-radius: 7px; background: #9f9f9f; margin: 8px 0 auto; }
.gh { height: 97px; flex: none; border-bottom: 2px solid #343940; display: flex; align-items: center; padding: 3px 24px 0 24px; fill: #9198a1; }
.ib { width: 48px; height: 48px; border: 1.500px solid #3d444d; border-radius: 9px; display: flex; align-items: center; justify-content: center; margin-right: 12px; }
.logo { width: 47px; height: 47px; fill: #f0f6fc; margin-left: 8px; }
.search { width: 390px; height: 47px; margin-left: auto; margin-right: 12px; border: 1.500px solid #3d444d; border-radius: 9px; display: flex; align-items: center; padding-left: 11px; color: #9198a1; font-size: 20px; }
.search .s1 { margin: 2px 0 0 12px; width: 48px; }
.search .s2t { margin: 2px 0 0 7px; letter-spacing: -.3px; }
kbd { width: 24px; height: 24px; border: 1.500px solid #9198a1; border-radius: 5px; font: 17px "Open Sans"; line-height: 21px; text-align: center; margin-top: 5px; }
.group { height: 48px; border: 1.500px solid #3d444d; border-radius: 9px; display: flex; align-items: center; }
.cop { width: 84px; }
.cop span { width: 48px; height: 100%; display: flex; align-items: center; justify-content: center; border-right: 1px solid #3d444d; }
.cop .car { width: 34px; border: 0; padding-top: 2px; }
.vs { width: 1px; height: 30px; background: #3d444d; margin: 0 18px; }
.add { width: 86px; margin-right: 12px; padding-left: 11px; gap: 19px; }
.add > :last-child { margin-top: 4px; }
.avatar { width: 49px; height: 49px; }

main { display: flex; flex-direction: column; align-items: center; padding-top: 34px; }
h1 { margin: 0; font-size: 45.500px; font-weight: 300; line-height: 80px; letter-spacing: -.35px; white-space: nowrap; }
.steps { display: flex; align-items: center; margin-top: 24px; }
.steps i { width: 94px; height: 1.500px; background: #656c76; }
.steps i.blue { background: #3a7ad0; }
.st { width: 48px; height: 48px; border-radius: 50%; border: 1.500px solid #656c76; display: flex; align-items: center; justify-content: center; font-size: 20px; color: #9198a1; font-weight: 600; }
.st.done { border-color: #2a68c4; }
.st.cur { background: #1f6feb; border-color: #1f6feb; color: #fff; }
.card { width: 1104px; height: 1100px; margin-top: 42px; padding: 0 36px; background: #0d1117; border: 1.500px solid #3d444d; border-radius: 9px; }
h2 { margin: 25px 0 0; font-size: 28px; font-weight: 600; line-height: 45px; letter-spacing: .2px; white-space: nowrap; }
.lead { margin: 24px 0 0; font-size: 20px; line-height: 32px; color: #9198a1; white-space: nowrap; }
.l1 { letter-spacing: -.05px; }
.l2 { letter-spacing: -.14px; }
u { text-underline-offset: 3px; }
.info { height: 114px; margin-top: 34px; padding: 25px 0 0 24px; display: flex; border: 1.500px solid #254475; border-radius: 9px; background: #121d2f; }
.info svg { margin: 4px 18px 0 0; }
.info div { display: flex; flex-direction: column; font-size: 20px; line-height: 32px; white-space: nowrap; }
.info strong { font-weight: 600; letter-spacing: -.1px; }
.info span { letter-spacing: 0; }
.codes { height: 481px; margin-top: 34px; padding: 49px 0 0 145px; background: #151b23; border-radius: 4px; display: flex; }
.codes ul { flex: none; width: 494.500px; margin: 0; padding: 0; list-style: none; font: 700 26px/48px "DejaVu Sans Mono", monospace; letter-spacing: .85px; }
.codes ul:last-child { width: 300px; }
.codes li { display: flex; align-items: center; }
.codes li::before { content: ""; width: 8px; height: 8px; border-radius: 50%; background: #9198a1; margin: 0 13px 0 2px; }
.dl { display: flex; justify-content: flex-end; padding: 24px 0 23px; border-bottom: 1.500px solid #30363d; }
.btn { height: 47px; border-radius: 9px; font: 600 20px "Open Sans", sans-serif; white-space: nowrap; display: flex; align-items: center; justify-content: center; padding: 0; }
.btn span { margin-top: 2px; }
.download { width: 183px; background: #238636; border: 1.500px solid #3e9650; color: #fff; gap: 12px; letter-spacing: -.1px; }
.saved { width: 351px; background: #105823; border: 0; color: #75a37d; letter-spacing: -.12px; }
.actions { display: flex; justify-content: flex-end; align-items: center; padding-top: 37px; }
.actions a { font-size: 20px; font-weight: 600; color: #4493f8; margin: 1px 36px 0 0; letter-spacing: -.2px; }

/* taskbar */
.taskbar { position: relative; height: 72px; display: flex; align-items: center; padding-bottom: 2px; border-top: 2px solid #4c4055; background: linear-gradient(90deg, #3c1642 0, #3b1544 1050px, #2d1560 1360px, #18206c 1520px, #17264c 1620px, #15293c 1800px, #142b36 2100px, #142a30 2560px); color: #fff; }
.weather { display: flex; width: 631px; padding-left: 30px; font-size: 17px; }
.weather div { display: flex; flex-direction: column; margin: 0 0 0 6px; line-height: 24px; letter-spacing: 0; }
.weather svg { margin-bottom: 6px; }
.w1 { letter-spacing: -.5px; }
.w2 { color: #cbbdd0; }
.start { width: 35px; height: 35px; margin-left: 2px; }
.tsearch { width: 330px; height: 48px; margin-left: 20px; border-radius: 24px; background: #58385f; border: 1.500px solid #6c4b73; display: flex; align-items: center; padding-left: 17px; font-size: 20px; color: #dcd2e0; }
.tsearch span { margin: 0 0 0 16px; }
.apps-row { display: flex; margin-left: 6px; gap: 6px; }
.app { position: relative; width: 60px; height: 60px; display: flex; align-items: center; justify-content: center; border-radius: 6px; }
.app svg { width: 36px; height: 36px; }
.app.on { background: #25325c; border: 1px solid #2f3d66; }
.app i { position: absolute; bottom: 1px; left: 50%; width: 9px; height: 5px; margin-left: -4.500px; border-radius: 3px; background: #8c9aa8; }
.app.on i { width: 24px; margin-left: -12px; background: #4cc2ff; bottom: 0; }
.tray { margin-left: auto; display: flex; align-items: center; padding-right: 30px; font-size: 17px; }
.t2 { margin-left: 27px; }
.ces { width: 32px; margin: 0 27px 0 30px; letter-spacing: -.1px; }
.t4 { margin-left: 12px; }
.t5 { margin: 0 0 2px 12px; }
.clock { width: 110px; display: flex; flex-direction: column; align-items: flex-end; line-height: 24px; letter-spacing: 0; }
```
